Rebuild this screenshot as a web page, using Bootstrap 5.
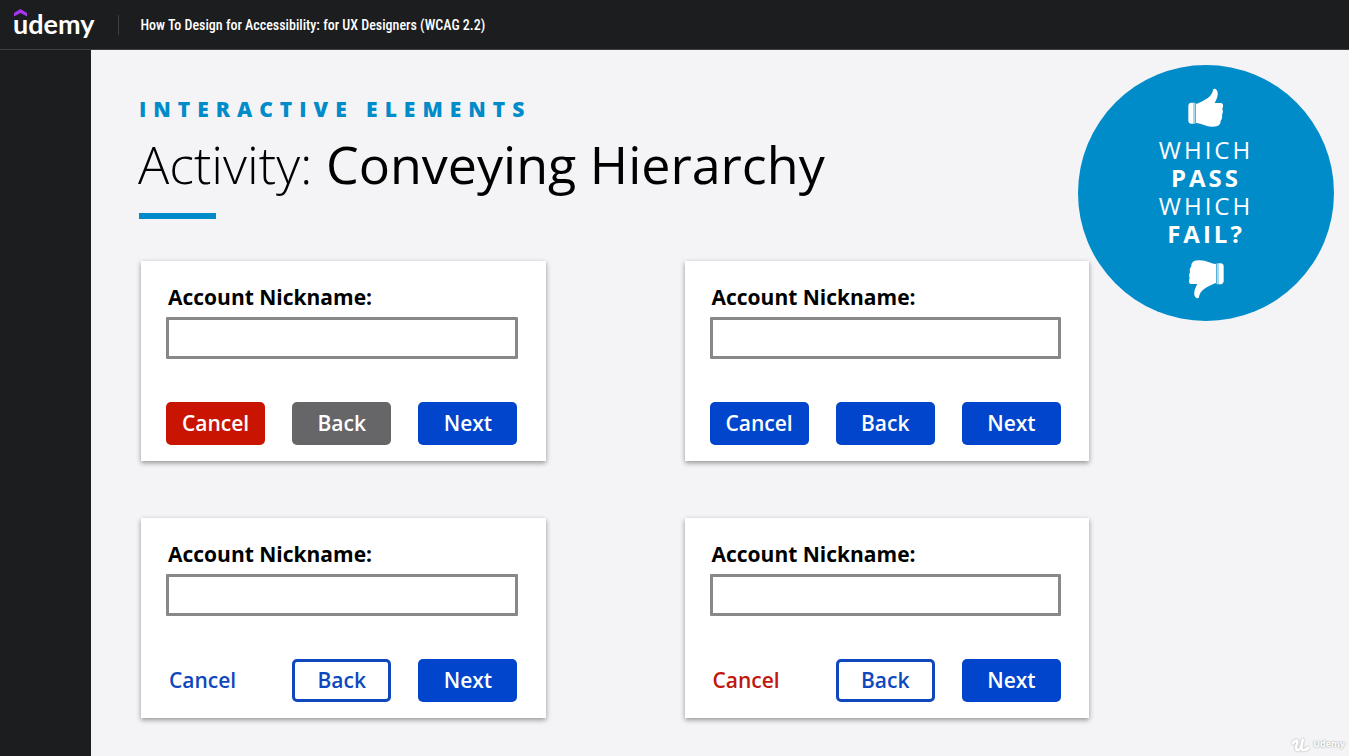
<!DOCTYPE html>
<html lang="en">
<head>
<meta charset="utf-8">
<meta name="viewport" content="width=device-width, initial-scale=1">
<title>How To Design for Accessibility: for UX Designers (WCAG 2.2)</title>
<link href="https://cdn.jsdelivr.net/npm/bootstrap@5.3.0/dist/css/bootstrap.min.css" rel="stylesheet">
<style>
  body { background: #1c1d1f; font-family: "Open Sans", "Noto Sans", sans-serif; }
  .topbar { height: 50px; padding: 0 13px; background: #1c1d1f; border-bottom: 1px solid #3e4143; }
  .brand { position: relative; font: 700 27px/40px Lato, sans-serif; color: #fff; text-decoration: none; padding-bottom: 2px; }
  .brand svg { position: absolute; left: 1px; top: 5px; }
  .divider { width: 1px; height: 20px; background: #3e4143; margin: 0 21px 0 24px; }
  .course { font: 500 14px/20px "Roboto Condensed", Roboto, sans-serif; color: #fff; text-decoration: none; }
  .rail { width: 91px; flex: none; }
  .slide { position: relative; background: #f4f4f6; padding: 45px 260px 37px 50px; color: #000; }
  .slide-title { margin: 0 0 42px -2px; }
  .eyebrow { font-size: 21px; line-height: 28px; font-weight: 800; letter-spacing: 7px; color: #008bc9; margin: 0 0 5px; }
  .headline { font-size: 52px; line-height: 72px; font-weight: 450; margin: 0 0 13px -1px; white-space: nowrap; }
  .headline span { font-weight: 300; }
  .rule { width: 77px; height: 6px; background: #008bc9; }
  .samples { display: grid; grid-template-columns: 1fr 1fr; gap: 57px 139px; }
  .sample { background: #fff; height: 200px; padding: 22px 28px 0 25px; box-shadow: 0 2px 5px rgba(0,0,0,.4); }
  .sample label { display: block; font-size: 21px; line-height: 28px; font-weight: 700; padding-left: 2px; margin-bottom: 6px; }
  .sample input { height: 42px; border: 3px solid #888; border-radius: 1px; padding: 0 8px; margin-bottom: 43px; }
  .actions { display: grid; grid-template-columns: repeat(3, 1fr); gap: 27px; }
  .actions .btn { height: 43px; padding: 0 0 2px; border: 3px solid transparent; border-radius: 5px; font-size: 21px; line-height: 34px; font-weight: 600; color: #fff; }
  .actions .go { background: #0045cb; }
  .actions .stop { background: #c81400; }
  .actions .mute { background: #666567; }
  .actions .ghost { border-color: #0f48be; color: #0f48be; background: #fff; }
  .actions .plain { text-align: left; color: #0f48be; }
  .actions .plain.alert-tone { color: #c1170c; }
  .callout { position: absolute; top: 15px; right: 15px; width: 256px; height: 256px; background: #008bc9; color: #fff; font-size: 24px; line-height: 28px; letter-spacing: 3px; }
  .callout p { margin: 9px 0 12px; }
  .callout .flip { transform: rotate(180deg); }
  .watermark { position: absolute; right: 4px; bottom: 4px; font-size: 9px; line-height: 16px; font-weight: 700; color: #fff; text-shadow: 0 0 2px #888; }
  .watermark svg { filter: drop-shadow(0 0 1px #aaa); }
</style>
</head>
<body class="min-vh-100 d-flex flex-column">
<header class="topbar d-flex align-items-center">
  <a class="brand" href="#">udemy<svg width="13" height="8" viewBox="0 0 13 8" aria-hidden="true"><path d="M0 4 6.500 0 13 4V7.500L6.500 4 0 7.500z" fill="#a435f0"/></svg></a>
  <span class="divider"></span>
  <a class="course" href="#">How To Design for Accessibility: for UX Designers (WCAG 2.2)</a>
</header>
<div class="d-flex flex-grow-1">
  <div class="rail"></div>
  <main class="slide flex-grow-1">
    <div class="slide-title">
      <p class="eyebrow">INTERACTIVE ELEMENTS</p>
      <h1 class="headline"><span>Activity:</span> Conveying Hierarchy</h1>
      <div class="rule"></div>
    </div>
    <section class="samples">
      <form class="sample">
        <label for="nick1">Account Nickname:</label>
        <input id="nick1" type="text" class="w-100 d-block">
        <div class="actions"><button type="button" class="btn stop">Cancel</button><button type="button" class="btn mute">Back</button><button type="button" class="btn go">Next</button></div>
      </form>
      <form class="sample">
        <label for="nick2">Account Nickname:</label>
        <input id="nick2" type="text" class="w-100 d-block">
        <div class="actions"><button type="button" class="btn go">Cancel</button><button type="button" class="btn go">Back</button><button type="button" class="btn go">Next</button></div>
      </form>
      <form class="sample">
        <label for="nick3">Account Nickname:</label>
        <input id="nick3" type="text" class="w-100 d-block">
        <div class="actions"><button type="button" class="btn plain">Cancel</button><button type="button" class="btn ghost">Back</button><button type="button" class="btn go">Next</button></div>
      </form>
      <form class="sample">
        <label for="nick4">Account Nickname:</label>
        <input id="nick4" type="text" class="w-100 d-block">
        <div class="actions"><button type="button" class="btn plain alert-tone">Cancel</button><button type="button" class="btn ghost">Back</button><button type="button" class="btn go">Next</button></div>
      </form>
    </section>
    <aside class="callout rounded-circle d-flex flex-column align-items-center justify-content-center text-center">
      <svg width="36" height="39" viewBox="26 21 108 117" fill="#fff" aria-hidden="true"><path id="thumb" d="M43 65H34Q27 66 27 74V120Q28 128 36 128H43zM45 65H48V128H45zM50 69Q58 66 66 62C82 54 98 46 101 27Q103 21 109 24C120 32 115 50 106 66H125Q133 68 131 77L129 84Q132 90 130 96L128 102Q130 109 127 115L124 119Q125 128 119 133Q111 138 98 137C80 137 67 127 50 126z"/></svg>
      <p><span class="d-block">WHICH</span><b class="d-block">PASS</b><span class="d-block">WHICH</span><b class="d-block">FAIL?</b></p>
      <svg class="flip" width="36" height="39" viewBox="26 21 108 117" fill="#fff" aria-hidden="true"><use href="#thumb"/></svg>
    </aside>
    <div class="watermark d-flex align-items-center gap-1"><svg width="17" height="15" viewBox="0 0 17 15" fill="none" stroke="#fff" stroke-width="2.500" stroke-linecap="round" aria-hidden="true"><path d="M1 6Q6 1 5 6Q3 13 6 13Q9 13 11 2Q8 13 11 13Q14 13 16 11"/></svg>Udemy</div>
  </main>
</div>
<script src="https://cdn.jsdelivr.net/npm/bootstrap@5.3.0/dist/js/bootstrap.bundle.min.js"></script>
</body>
</html>
